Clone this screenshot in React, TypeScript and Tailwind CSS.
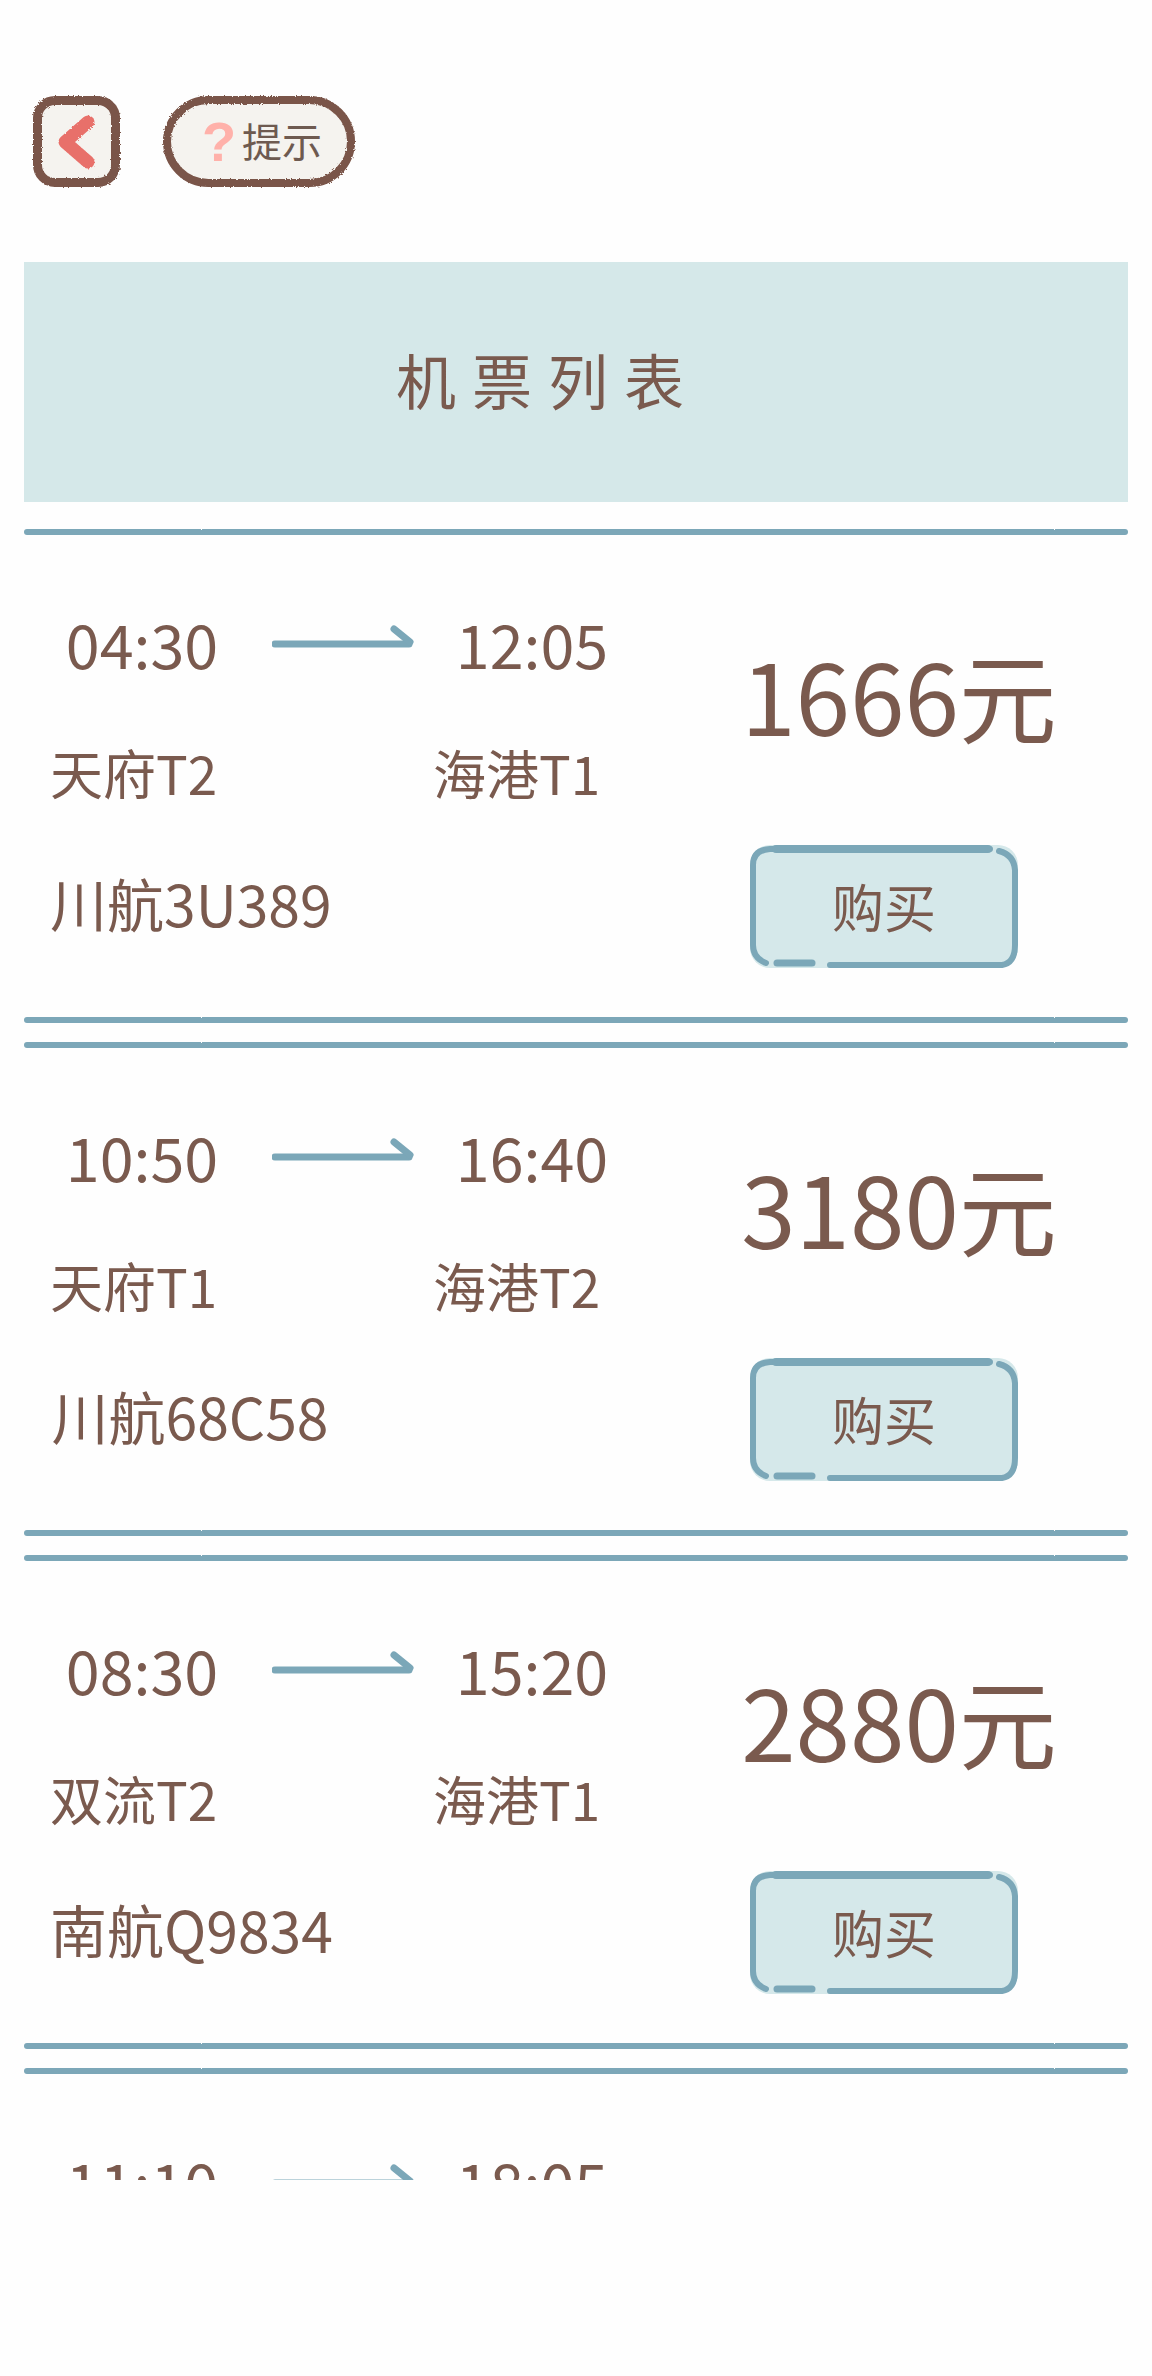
import React from "react";

const flights = [
  { dep: "04:30", arr: "12:05", from: "天府T2", to: "海港T1", no: "川航3U389", price: "1666元" },
  { dep: "10:50", arr: "16:40", from: "天府T1", to: "海港T2", no: "川航68C58", price: "3180元" },
  { dep: "08:30", arr: "15:20", from: "双流T2", to: "海港T1", no: "南航Q9834", price: "2880元" },
  { dep: "11:10", arr: "18:05", from: "天府T2", to: "海港T1", no: "川航3U389", price: "1666元" },
];

function Line() {
  return <div className="h-[6px] rounded-full bg-[#7ba7b8] [filter:url(#rough-soft)]" />;
}

function Arrow() {
  return (
    <svg width="146" height="30" viewBox="0 0 146 30" fill="none" className="mb-[12px] shrink-0">
      <path d="M3 22 H137" stroke="#7ba7b8" strokeWidth="7" strokeLinecap="round" />
      <path d="M122 7 L138 20" stroke="#7ba7b8" strokeWidth="7" strokeLinecap="round" />
    </svg>
  );
}

function BuyButton() {
  return (
    <button className="relative ml-[46px] flex h-[123px] w-[268px] items-center justify-center rounded-[20px] bg-[#d5e8ea] pb-[2px] text-[52px] leading-none text-[#7a5a4e]">
      <svg
        width="268"
        height="123"
        viewBox="0 0 268 123"
        fill="none"
        strokeLinecap="round"
        stroke="#7ba7b8"
        className="absolute inset-0"
      >
        <path d="M16 118 Q3 113 3 100 L3 20 Q3 5 20 4 L240 4" strokeWidth="6" />
        <path d="M26 4 H238" strokeWidth="8" />
        <path d="M249 6 Q264 10 265 25 V100 Q265 118 252 120 H80" strokeWidth="6" />
        <path d="M27 118 H62" strokeWidth="7" />
      </svg>
      <span className="relative">购买</span>
    </button>
  );
}

function FlightRow({ f }: { f: (typeof flights)[number] }) {
  return (
    <div className="flex h-[482px] pt-[43px]">
      {/* Left: times, terminals, flight number */}
      <div className="w-[680px]">
        <div className="flex h-[130px] items-center pl-[28px] text-[61px]">
          <span className="w-[180px] text-center">{f.dep}</span>
          <div className="ml-[40px]">
            <Arrow />
          </div>
          <span className="ml-[24px] w-[180px] text-center">{f.arr}</span>
        </div>
        <div className="flex h-[130px] items-center pl-[26px] text-[53px]">
          <span className="w-[383px]">{f.from}</span>
          <span>{f.to}</span>
        </div>
        <div className="flex h-[130px] items-center pl-[26px] text-[57px]">
          <span className="w-[280px] text-center whitespace-nowrap">{f.no}</span>
        </div>
      </div>
      {/* Right: price and buy */}
      <div className="w-[424px] pt-[55px]">
        <div className="h-[212px] w-[390px] text-center text-[98px] leading-[120px]">{f.price}</div>
        <BuyButton />
      </div>
    </div>
  );
}

export default function App() {
  return (
    <div className="h-[2376px] overflow-hidden bg-[#fefefe] font-['Noto_Sans_CJK_SC','Noto_Sans',sans-serif] font-normal text-[#7a5a4e]">
      <svg width="0" height="0" className="absolute">
        <filter id="rough">
          <feTurbulence type="fractalNoise" baseFrequency="0.6" numOctaves="2" seed="3" />
          <feDisplacementMap in="SourceGraphic" scale="3" />
        </filter>
        <filter id="rough-soft">
          <feTurbulence type="fractalNoise" baseFrequency="0.3" numOctaves="2" seed="5" />
          <feDisplacementMap in="SourceGraphic" scale="1.5" />
        </filter>
      </svg>

      {/* Top buttons */}
      <div className="flex items-center px-[33px] pt-[96px]">
        <button className="flex h-[91px] w-[87px] items-center justify-center rounded-[22px] border-[9px] border-[#7a5448] bg-[#f5f3ef] [filter:url(#rough)]">
          <svg width="40" height="60" viewBox="0 0 40 60" fill="none">
            <path d="M31 10 L8 30 L31 50" stroke="#e8706a" strokeWidth="13" strokeLinecap="round" strokeLinejoin="round" />
          </svg>
        </button>
        <button className="relative ml-[43px] flex h-[91px] w-[192px] items-center rounded-full bg-[#f5f3ef] pl-[33px] text-[40px] leading-none text-[#6e5a50]">
          <div className="absolute inset-0 rounded-full border-[8px] border-[#7a5448] [filter:url(#rough)]" />
          <span className="w-[46px] font-['Liberation_Sans'] text-[56px] font-bold text-[#ffb1aa]">?</span>
          <span className="-mt-[4px]">提示</span>
        </button>
      </div>

      {/* Title band */}
      <div className="mx-[24px] mt-[75px] flex h-[240px] items-center justify-center bg-[#d5e8e9] pr-[56px] pb-[6px] text-[60px] tracking-[16px]">
        机票列表
      </div>

      {/* Ticket list, cut off by its scroll area */}
      <div className="mx-[24px] mt-[27px] h-[1651px] overflow-hidden">
        {flights.map((f) => (
          <div key={f.dep} className="mb-[19px]">
            <Line />
            <FlightRow f={f} />
            <Line />
          </div>
        ))}
      </div>
    </div>
  );
}
